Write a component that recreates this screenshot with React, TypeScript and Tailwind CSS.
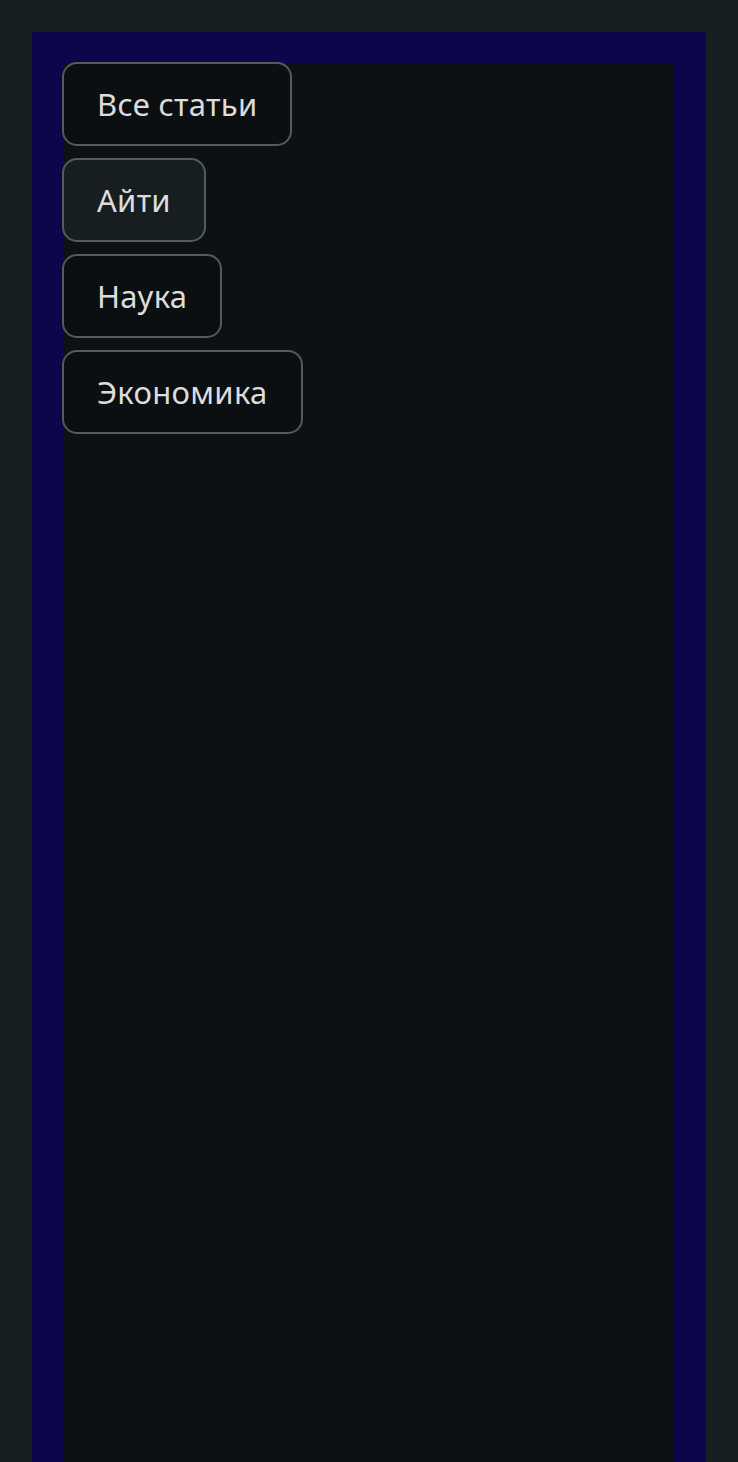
import React from "react";

const items = ["Все статьи", "Айти", "Наука", "Экономика"];

export default function App() {
  return (
    <div className="min-h-[1462px] bg-[#171e21] px-8 pt-8" style={{ fontFamily: "'Noto Sans', 'Open Sans', sans-serif" }}>
      <div className="bg-[#0b074a] px-8 pt-8 min-h-[1430px] flex flex-col">
        <div className="bg-[#0d1114] flex-1 min-h-[1398px]">
          <div className="-mt-[2px] -ml-[2px] flex flex-col items-start gap-[12px]">
            {items.map((t, i) => (
              <button
                key={t}
                className={`h-[84px] px-[33px] rounded-[15px] border-2 border-[#555a5c] text-[31px] font-normal tracking-[0.3px] text-[#dcdcdc] ${i === 1 ? "bg-[#171e21]" : "bg-[#0b0f11]"}`}
              >
                {t}
              </button>
            ))}
          </div>
        </div>
      </div>
    </div>
  );
}
